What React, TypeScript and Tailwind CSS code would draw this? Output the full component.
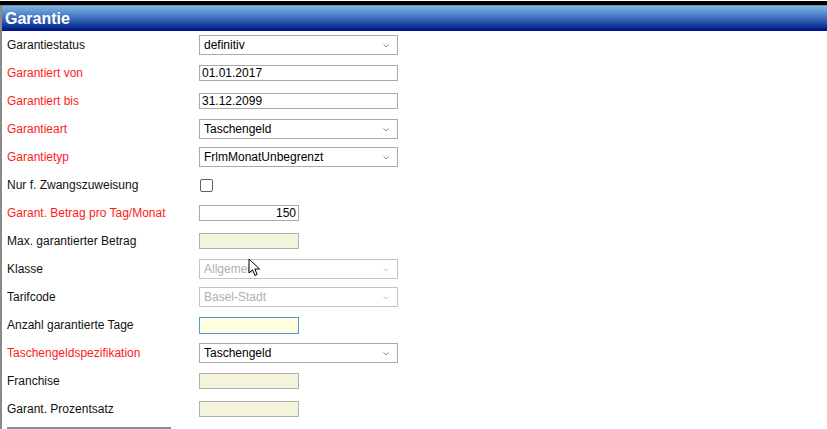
import React from "react";

type Row = {
  label: string;
  red?: boolean;
  kind: "select" | "text" | "check" | "beige" | "focus" | "number";
  value?: string;
  disabled?: boolean;
};

const rows: Row[] = [
  { label: "Garantiestatus", kind: "select", value: "definitiv" },
  { label: "Garantiert von", red: true, kind: "text", value: "01.01.2017" },
  { label: "Garantiert bis", red: true, kind: "text", value: "31.12.2099" },
  { label: "Garantieart", red: true, kind: "select", value: "Taschengeld" },
  { label: "Garantietyp", red: true, kind: "select", value: "FrlmMonatUnbegrenzt" },
  { label: "Nur f. Zwangszuweisung", kind: "check" },
  { label: "Garant. Betrag pro Tag/Monat", red: true, kind: "number", value: "150" },
  { label: "Max. garantierter Betrag", kind: "beige" },
  { label: "Klasse", kind: "select", value: "Allgemein", disabled: true },
  { label: "Tarifcode", kind: "select", value: "Basel-Stadt", disabled: true },
  { label: "Anzahl garantierte Tage", kind: "focus" },
  { label: "Taschengeldspezifikation", red: true, kind: "select", value: "Taschengeld" },
  { label: "Franchise", kind: "beige" },
  { label: "Garant. Prozentsatz", kind: "beige" },
];

function Chevron({ muted }: { muted?: boolean }) {
  return (
    <svg width="6" height="4" viewBox="0 0 6 4" className="absolute right-[8px] top-[8px]">
      <path d="M0.5 0.5 L3 3 L5.5 0.5" fill="none" stroke={muted ? "#c0c0c0" : "#8a8a8a"} strokeWidth="1" />
    </svg>
  );
}

function Field({ row }: { row: Row }) {
  if (row.kind === "select") {
    return (
      <div
        className={`relative w-[199px] h-[20px] border bg-white pl-[4px] leading-[18px] ${
          row.disabled ? "border-[#c4c4c4] text-[#b0b0b0]" : "border-[#a9a9a9] text-black"
        }`}
      >
        {row.value}
        <Chevron muted={row.disabled} />
      </div>
    );
  }
  if (row.kind === "text") {
    return (
      <div className="w-[199px] h-[16px] border border-[#a9a9a9] bg-white pl-[2px] leading-[14px] text-black">
        {row.value}
      </div>
    );
  }
  if (row.kind === "number") {
    return (
      <div className="w-[100px] h-[16px] border border-[#a9a9a9] bg-white pr-[2px] text-right leading-[14px] text-black">
        {row.value}
      </div>
    );
  }
  if (row.kind === "check") {
    return <div className="ml-[1px] w-[13px] h-[13px] border border-[#5f5f5f] rounded-[2px] bg-white" />;
  }
  if (row.kind === "focus") {
    return <div className="w-[100px] h-[17px] border border-[#5b95d6] bg-[#ffffe0]" />;
  }
  return <div className="w-[100px] h-[16px] border border-[#b0b0b0] bg-[#f4f4dc]" />;
}

export default function App() {
  return (
    <div className="relative w-[827px] h-[429px] overflow-hidden bg-white font-['Liberation_Sans',Arial,sans-serif] text-[12px]">
      <div className="h-[1px] bg-white" />
      <div className="h-[4px] bg-black" />
      <div className="h-[1px] bg-[#7a8a96]" />
      <div className="flex border-l-2 border-[#8a8a8a] flex-col">
        <div className="h-[25px] bg-gradient-to-b from-[#7bb7e2] via-[#3d6bbd] to-[#020a84] pl-[3px] flex items-center">
          <span className="text-white font-bold text-[16px] leading-none">Garantie</span>
        </div>
        <div className="flex flex-col">
          {rows.map((r) => (
            <div key={r.label} className="h-[28px] flex items-center">
              <div className={`w-[197px] pl-[5px] ${r.red ? "text-[#ff1a1a]" : "text-[#111]"}`}>{r.label}</div>
              <Field row={r} />
            </div>
          ))}
        </div>
        <div className="ml-[5px] mt-[4px] w-[164px] border-t-2 border-[#8c8c8c]" />
      </div>
      {/* mouse pointer */}
      <svg className="absolute left-[248px] top-[258px]" width="14" height="20" viewBox="0 0 14 20">
        <path d="M1 1 L1 15 L4.5 11.8 L7 17.5 L9.2 16.5 L6.8 11 L11.5 11 Z" fill="white" stroke="black" strokeWidth="1" strokeLinejoin="round" />
      </svg>
    </div>
  );
}
